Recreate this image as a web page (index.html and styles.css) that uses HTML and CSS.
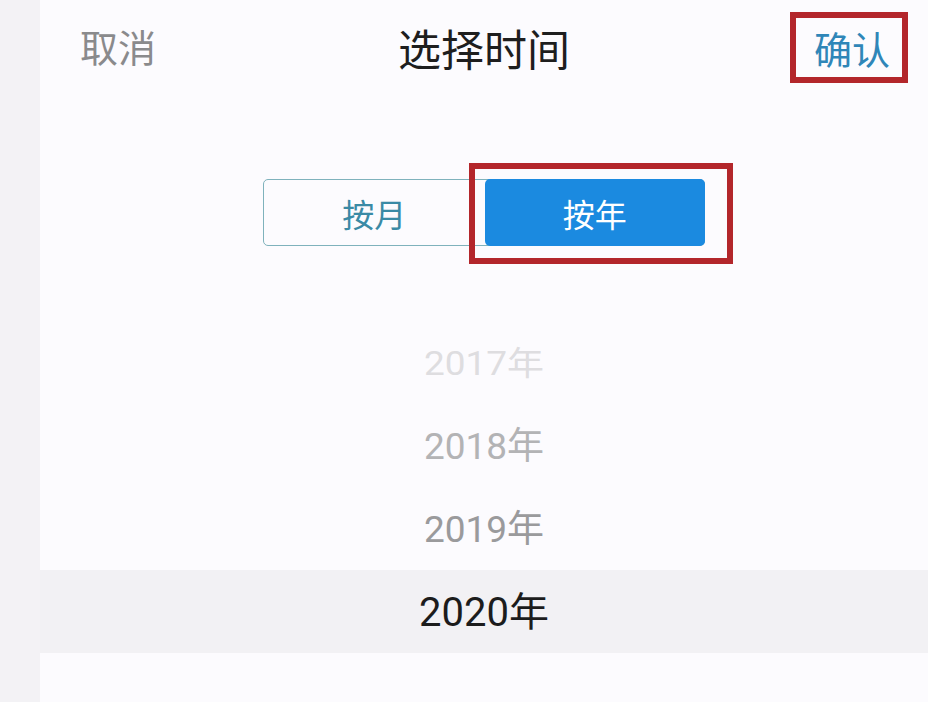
FILE: index.html
```html
<!DOCTYPE html>
<html lang="zh-CN">
<head>
    <meta charset="UTF-8">
    <meta name="viewport" content="width=device-width, initial-scale=1.0">
    <title>选择时间</title>
    <link rel="stylesheet" href="styles.css">
</head>
<body>
    <div class="sheet">
        <header class="sheet-header">
            <span class="cancel">取消</span>
            <h1 class="title">选择时间</h1>
            <span class="confirm">确认</span>
        </header>

        <div class="mode-switch">
            <div class="segmented">
                <span class="segment">按月</span>
                <span class="segment active">按年</span>
                <span class="mark mark-year"></span>
            </div>
        </div>

        <ul class="picker">
            <li class="year far">2017年</li>
            <li class="year mid">2018年</li>
            <li class="year near">2019年</li>
            <li class="year current">2020年</li>
            <li class="year empty"></li>
        </ul>
    </div>
</body>
</html>
```

FILE: styles.css
```css
body {
    margin: 0;
    background-color: #f3f2f5;
    font-family: 'Noto Sans CJK SC', 'Noto Sans', sans-serif;
    color: #222;
    height: 702px;
    overflow: hidden;
}
.sheet {
    margin-left: 40px;
    height: 702px;
    background-color: #fcfbfe;
}
.sheet-header {
    height: 95px;
    display: grid;
    grid-template-columns: 1fr auto 1fr;
    align-items: center;
    padding: 0 20px;
}
.cancel {
    justify-self: start;
    padding: 0 0 4px 20px;
    font-size: 38px;
    color: #8a8a8c;
}
.title {
    margin: 0 0 2px;
    font-size: 43px;
    font-weight: normal;
    color: #1e1e1e;
}
.confirm {
    justify-self: end;
    display: inline-block;
    border: 6px solid #b3262b;
    padding: 6px 12px 6px 18px;
    font-size: 38px;
    line-height: 47px;
    color: #2f86b8;
}

/* 按月 / 按年 */
.mode-switch {
    display: flex;
    justify-content: center;
    margin-top: 84px;
}
.segmented {
    position: relative;
    display: flex;
    width: 442px;
    height: 67px;
    box-sizing: border-box;
    border: 1px solid #7fb2bc;
    border-radius: 5px;
}
.segment {
    flex: 1;
    display: flex;
    align-items: center;
    justify-content: center;
    font-size: 32px;
    color: #3a8aa5;
}
.segment.active {
    margin: -1px -1px -1px 0;
    background-color: #1b8ae0;
    color: #fff;
    border-radius: 5px;
}
.mark {
    position: absolute;
    border: 6px solid #b3262b;
    box-sizing: border-box;
}
.mark-year {
    left: 205px;
    top: -17px;
    width: 264px;
    height: 101px;
}

/* year wheel */
.picker {
    list-style: none;
    margin: 75px 0 0;
    padding: 0;
}
.year {
    height: 83px;
    box-sizing: border-box;
    padding-bottom: 5px;
    display: flex;
    align-items: center;
    justify-content: center;
    font-family: 'Roboto', 'Noto Sans CJK SC', sans-serif;
    font-size: 37px;
}
.year.far {
    color: #dedde0;
    transform: scaleY(0.9);
}
.year.mid {
    color: #b3b3b5;
}
.year.near {
    color: #9a9a9c;
}
.year.current {
    background-color: #f2f1f4;
    color: #1c1c1c;
    font-size: 40px;
}
```
